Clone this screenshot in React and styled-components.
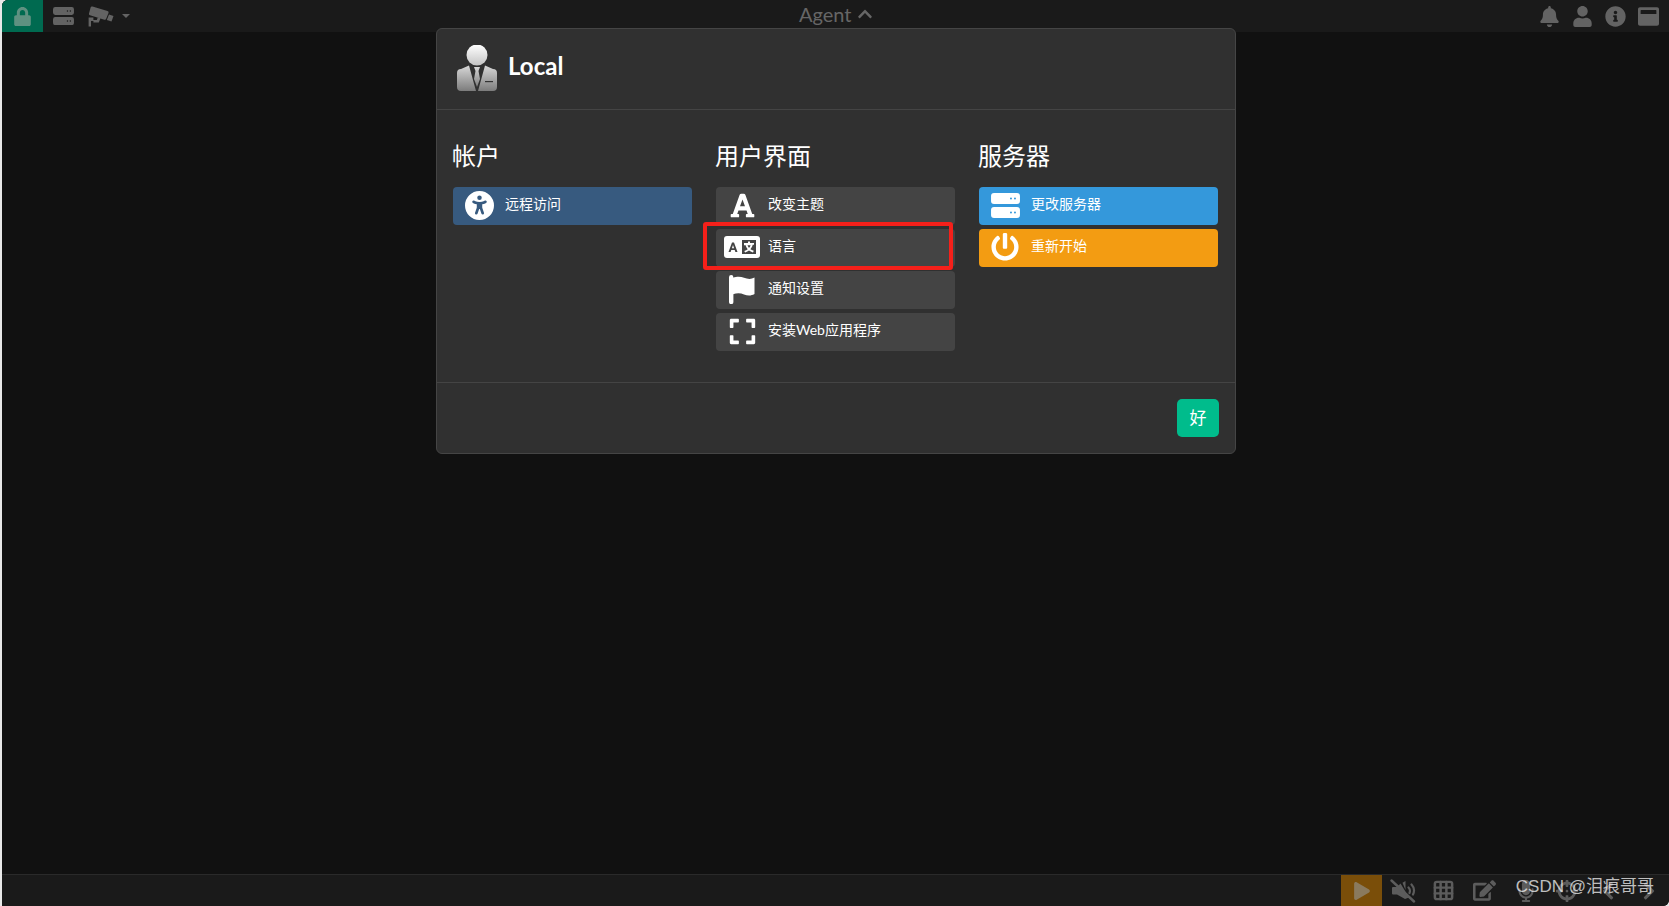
import React from 'react'
import styled, { createGlobalStyle } from 'styled-components'
import {
  FaLock, FaBell, FaUser, FaInfoCircle, FaWindowMaximize, FaPlay, FaEdit,
  FaMicrophone, FaChevronUp, FaChevronLeft, FaChevronRight, FaFont, FaExpand,
  FaPowerOff, FaCrosshairs,
} from 'react-icons/fa'
import { FaUniversalAccess } from 'react-icons/fa6'
import { Grid3x3 } from 'lucide-react'

const GlobalStyle = createGlobalStyle`
  html, body { margin: 0; padding: 0; background: #e8e8e8; overflow: hidden; }
  * { box-sizing: border-box; }
  body { font-family: Lato, "Noto Sans CJK SC", sans-serif; }
`

const ServerIcon = ({ size = 29 }) => (
  <svg width={size} height={size * 0.86} viewBox="0 0 29 25" fill="currentColor">
    <path fillRule="evenodd" d="M3 0h23a3 3 0 0 1 3 3v5a3 3 0 0 1-3 3H3a3 3 0 0 1-3-3V3a3 3 0 0 1 3-3zm17 4.500a1 1 0 1 0 0 2 1 1 0 0 0 0-2zm4 0a1 1 0 1 0 0 2 1 1 0 0 0 0-2z" />
    <path fillRule="evenodd" d="M3 14h23a3 3 0 0 1 3 3v5a3 3 0 0 1-3 3H3a3 3 0 0 1-3-3v-5a3 3 0 0 1 3-3zm17 4.500a1 1 0 1 0 0 2 1 1 0 0 0 0-2zm4 0a1 1 0 1 0 0 2 1 1 0 0 0 0-2z" />
  </svg>
)

const CameraIcon = () => (
  <svg width="26" height="21" viewBox="0 0 26 21" fill="currentColor">
    <path d="M4.500.500 19.500 5a1.500 1.500 0 0 1 1 2l-2.300 5.800a1.500 1.500 0 0 1-1.800.9L2 9.200A1.500 1.500 0 0 1 1 7.400L2.600 1.500A1.500 1.500 0 0 1 4.500.500z" />
    <path d="M21 8.500 25.500 10 23.500 15.500 18.800 14z" />
    <path d="M3 11.500h2.400v2.500h3.400l1-2.600 2.700.9-1.700 4.200H5.400V15H3v5.500H.6v-9z" />
  </svg>
)

const MuteIcon = () => (
  <svg width="26" height="24" viewBox="0 0 26 24" fill="none">
    <path d="M3 8h4l3.500-3.500L19 18.500 15 20 7 15.500H3a1 1 0 0 1-1-1V9a1 1 0 0 1 1-1z" fill="currentColor" />
    <path d="M12.500 3.800 15.500 2v9z" fill="currentColor" />
    <path d="M18.500 8.500a5 5 0 0 1 1 5.500M21.500 5.500a9 9 0 0 1 1.500 10" stroke="currentColor" strokeWidth="2.200" strokeLinecap="round" />
    <path d="M1.500 1.500 24 22.500" stroke="currentColor" strokeWidth="2.400" strokeLinecap="round" />
  </svg>
)

const LanguageIcon = () => (
  <svg width="36" height="22" viewBox="0 0 36 22">
    <rect width="36" height="22" rx="3" fill="#ffffff" />
    <path d="M8 6.500h2l3.500 9.500h-2.100l-.7-2H7.300l-.7 2H4.500zM9 9l-1.100 3.300h2.200z" fill="#444444" fillRule="evenodd" />
    <rect x="18" y="4" width="14" height="14" fill="#444444" />
    <path d="M24 5.500h2v1.500h4v1.800h-1.300c-.5 2-1.300 3.400-2.300 4.500.9.600 2 1.100 3.400 1.500l-.8 1.800c-1.600-.5-3-1.200-4-2-1 .8-2.300 1.500-3.900 2l-.8-1.700c1.400-.4 2.500-.9 3.400-1.600-.9-1-1.600-2.200-2.100-3.700l1.800-.5c.4 1.100.9 2.100 1.600 2.900.7-.8 1.200-1.700 1.600-2.700H20V7h4z" fill="#ffffff" />
  </svg>
)

const FlagIcon = () => (
  <svg width="26" height="29" viewBox="0 0 26 29" fill="currentColor">
    <path d="M2.200 0A2.200 2.200 0 0 1 4.400 2.200V27a2.200 2.200 0 0 1-4.400 0V2.200A2.200 2.200 0 0 1 2.200 0z" />
    <path d="M4 2.800C8.500 1 12 1.600 15 2.800c3.500 1.300 7 1.800 10.500-.2V19c-3.500 2-7 1.800-10.500.4-3-1.200-6.500-1.700-11-.2z" />
  </svg>
)

const AgentAvatar = () => (
  <svg width="40" height="47" viewBox="0 0 40 47">
    <defs>
      <linearGradient id="headFill" x1="0" y1="0" x2="0" y2="1">
        <stop offset="0" stopColor="#ffffff" />
        <stop offset="1" stopColor="#c4c4c4" />
      </linearGradient>
      <linearGradient id="suitFill" x1="0" y1="0" x2="0" y2="1">
        <stop offset="0" stopColor="#d8d8d8" />
        <stop offset="1" stopColor="#7c7c7c" />
      </linearGradient>
    </defs>
    <circle cx="20" cy="10" r="10.500" fill="url(#headFill)" />
    <path d="M4 24 12 20.500 19 46H4a4 4 0 0 1-4-4V28a4 4 0 0 1 4-4z" fill="url(#suitFill)" />
    <path d="M36 24 28 20.500 21 46H36a4 4 0 0 0 4-4V28a4 4 0 0 0-4-4z" fill="url(#suitFill)" />
    <path d="M17 22h6l-1.500 4 1.500 8-3 8-3-8 1.500-8z" fill="url(#suitFill)" />
    <rect x="28" y="36" width="8" height="1.200" fill="#333" />
  </svg>
)

const topLeft = [
  { key: 'server', icon: <ServerIcon size={21} />, width: 40 },
  { key: 'camera', icon: <CameraIcon />, width: 36 },
]

const topRight = [FaBell, FaUser, FaInfoCircle, FaWindowMaximize]

const bottomIcons = [
  { key: 'mute', icon: <MuteIcon /> },
  { key: 'grid', icon: <Grid3x3 size={23} strokeWidth={2.6} /> },
  { key: 'edit', icon: <FaEdit size={23} /> },
  { key: 'mic', icon: <FaMicrophone size={22} /> },
  { key: 'aim', icon: <FaCrosshairs size={22} /> },
  { key: 'prev', icon: <FaChevronLeft size={20} /> },
  { key: 'next', icon: <FaChevronRight size={20} /> },
]

const columns = [
  {
    title: '帐户',
    items: [
      { label: '远程访问', tone: '#375a7f', icon: <FaUniversalAccess size={29} /> },
    ],
  },
  {
    title: '用户界面',
    items: [
      { label: '改变主题', tone: '#444444', icon: <FaFont size={27} /> },
      { label: '语言', tone: '#444444', icon: <LanguageIcon /> },
      { label: '通知设置', tone: '#444444', icon: <FlagIcon /> },
      { label: '安装Web应用程序', tone: '#444444', icon: <FaExpand size={29} /> },
    ],
  },
  {
    title: '服务器',
    items: [
      { label: '更改服务器', tone: '#3498db', icon: <ServerIcon /> },
      { label: '重新开始', tone: '#f39c12', icon: <FaPowerOff size={28} /> },
    ],
  },
]

export default function App() {
  return (
    <>
      <GlobalStyle />
      <Frame>
        <TopBar>
          <TopGroup>
            <LockTab><FaLock size={19} /></LockTab>
            {topLeft.map((item) => (
              <TopIcon key={item.key} $width={item.width}>{item.icon}</TopIcon>
            ))}
            <Caret />
          </TopGroup>
          <AgentTitle>Agent <FaChevronUp size={16} /></AgentTitle>
          <RightGroup>
            {topRight.map((Icon, i) => (
              <RightIcon key={i}><Icon size={21} /></RightIcon>
            ))}
          </RightGroup>
        </TopBar>

        <Stage />

        <BottomBar>
          <PlayTab><FaPlay size={18} /></PlayTab>
          {bottomIcons.map((item) => (
            <BottomIcon key={item.key}>{item.icon}</BottomIcon>
          ))}
        </BottomBar>

        <Overlay>
          <Modal>
            <ModalHeader>
              <AgentAvatar />
              <ModalTitle>Local</ModalTitle>
            </ModalHeader>
            <ModalBody>
              {columns.map((col) => (
                <Column key={col.title}>
                  <Heading>{col.title}</Heading>
                  <ButtonStack>
                    {col.items.map((item) => (
                      <MenuButton key={item.label} $tone={item.tone}>
                        <IconSlot>{item.icon}</IconSlot>
                        <MenuLabel>{item.label}</MenuLabel>
                      </MenuButton>
                    ))}
                  </ButtonStack>
                </Column>
              ))}
            </ModalBody>
            <ModalFooter>
              <OkButton>好</OkButton>
            </ModalFooter>
          </Modal>
        </Overlay>

        <Highlight />
        <Watermark>CSDN @泪痕哥哥</Watermark>
      </Frame>
    </>
  )
}

const Frame = styled.div`
  position: relative;
  display: flex;
  flex-direction: column;
  width: 1667px;
  height: 906px;
  margin-left: 2px;
  background: #111111;
  overflow: hidden;
  border-top-left-radius: 6px;
  border-bottom-right-radius: 6px;
`

const TopBar = styled.div`
  display: flex;
  align-items: center;
  justify-content: space-between;
  height: 32px;
  background: #1a1a1a;
  color: #636363;
`

const TopGroup = styled.div`
  display: flex;
  align-items: center;
  height: 100%;
`

const RightGroup = styled(TopGroup)`
  padding-right: 4px;
`

const LockTab = styled.div`
  display: flex;
  align-items: center;
  justify-content: center;
  width: 41px;
  height: 100%;
  background: #006a50;
  color: #5f9181;
`

const TopIcon = styled.div`
  display: flex;
  align-items: center;
  justify-content: center;
  width: ${({ $width }) => $width}px;
  height: 100%;
`

const Caret = styled.div`
  width: 0;
  height: 0;
  margin-left: 3px;
  border-left: 4px solid transparent;
  border-right: 4px solid transparent;
  border-top: 4px solid #636363;
`

const AgentTitle = styled.div`
  position: absolute;
  left: 797px;
  top: 0;
  height: 28px;
  display: flex;
  align-items: center;
  gap: 5px;
  font-size: 20px;
  color: #666666;
`

const RightIcon = styled.div`
  display: flex;
  align-items: center;
  justify-content: center;
  width: 33px;
  height: 100%;
`

const Stage = styled.div`
  flex: 1;
`

const BottomBar = styled.div`
  display: flex;
  justify-content: flex-end;
  height: 32px;
  background: #1a1a1a;
  border-top: 1px solid #2a2a2a;
  color: #5c5c5c;
`

const PlayTab = styled.div`
  display: flex;
  align-items: center;
  justify-content: center;
  width: 41px;
  background: #7a4e09;
  color: #8a7a5e;
`

const BottomIcon = styled.div`
  display: flex;
  align-items: center;
  justify-content: center;
  width: 41px;
`

const Overlay = styled.div`
  position: absolute;
  top: 28px;
  left: 434px;
`

const Modal = styled.div`
  display: flex;
  flex-direction: column;
  width: 800px;
  height: 426px;
  background: #303030;
  border: 1px solid #454545;
  border-radius: 6px;
`

const ModalHeader = styled.div`
  display: flex;
  align-items: center;
  gap: 11px;
  height: 81px;
  padding: 0 20px;
  border-bottom: 1px solid #444444;
`

const ModalTitle = styled.div`
  padding-bottom: 6px;
  font-size: 24px;
  font-weight: 700;
  color: #ffffff;
`

const ModalBody = styled.div`
  display: grid;
  grid-template-columns: repeat(3, 239px);
  gap: 24px;
  height: 274px;
  padding: 32px 16px 0;
  border-bottom: 1px solid #444444;
`

const Column = styled.div`
  display: flex;
  flex-direction: column;
`

const Heading = styled.div`
  height: 27px;
  margin: 0 0 18px -1px;
  font-size: 24px;
  line-height: 27px;
  color: #ffffff;
`

const ButtonStack = styled.div`
  display: flex;
  flex-direction: column;
  gap: 4px;
`

const MenuButton = styled.div`
  display: flex;
  align-items: center;
  height: 38px;
  padding-bottom: 1px;
  border-radius: 4px;
  background: ${({ $tone }) => $tone};
  font-size: 14px;
  color: #ffffff;
`

const IconSlot = styled.div`
  display: flex;
  align-items: center;
  justify-content: center;
  width: 52px;
  flex-shrink: 0;
  color: #ffffff;
`

const MenuLabel = styled.span`
  padding-bottom: 4px;
`

const ModalFooter = styled.div`
  display: flex;
  justify-content: flex-end;
  padding: 16px;
`

const OkButton = styled.div`
  display: flex;
  align-items: center;
  justify-content: center;
  width: 42px;
  height: 38px;
  padding-bottom: 3px;
  border-radius: 5px;
  background: #00bc8c;
  font-size: 17px;
  color: #ffffff;
`

const Highlight = styled.div`
  position: absolute;
  left: 701px;
  top: 222px;
  width: 250px;
  height: 48px;
  border: 4px solid #f5201a;
  border-radius: 3px;
`

const Watermark = styled.div`
  position: absolute;
  right: 15px;
  top: 872px;
  font-family: "Liberation Sans", "Noto Sans CJK SC", sans-serif;
  font-size: 17px;
  color: rgba(255, 255, 255, 0.72);
`
